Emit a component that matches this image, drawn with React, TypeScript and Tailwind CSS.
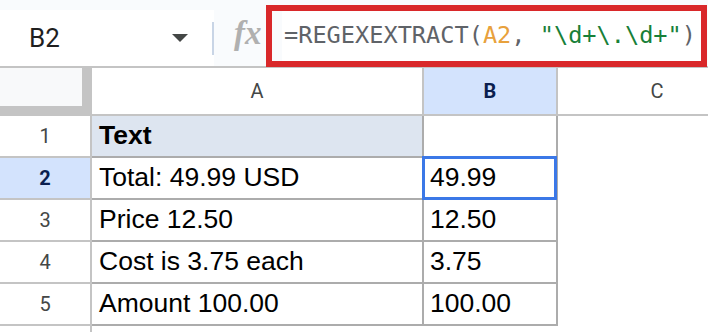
import React from "react";

const rows: { n: number; a: string; b: string }[] = [
  { n: 1, a: "Text", b: "" },
  { n: 2, a: "Total: 49.99 USD", b: "49.99" },
  { n: 3, a: "Price 12.50", b: "12.50" },
  { n: 4, a: "Cost is 3.75 each", b: "3.75" },
  { n: 5, a: "Amount 100.00", b: "100.00" },
];

export default function App() {
  return (
    <div className="w-[708px] h-[332px] overflow-hidden bg-white" style={{ fontFamily: "Roboto, 'Liberation Sans', sans-serif" }}>
      {/* Top bar */}
      <div className="flex h-[66px] bg-[#f9fbfd]">
        <div className="shrink-0 mt-[10px] h-[56px] w-[214px] bg-white flex items-center">
          <span className="ml-[29px] text-[26px] text-[#1f1f1f] leading-none">B2</span>
          <div className="ml-auto mr-[24px] w-0 h-0 border-l-[8px] border-r-[8px] border-t-[8px] border-l-transparent border-r-transparent border-t-[#444746]" />
          <div className="w-[2px] h-[33px] bg-[#c9d5e6]" />
        </div>
        <div className="shrink-0 w-[52px] flex items-center pl-[20px]">
          <span
            className="text-[33px] italic font-bold text-[#b0b0b0] leading-none"
            style={{ fontFamily: "'Liberation Serif', serif" }}
          >
            fx
          </span>
        </div>
        <div className="shrink-0 relative z-10 mt-[5px] h-[62px] w-[441px] border-[6px] border-[#d9282a] bg-[#f9fbfd] flex">
          <div className="ml-[10px] flex-1 bg-white flex items-center pl-[2px] whitespace-pre text-[23.6px] text-[#5f6368]" style={{ fontFamily: "'DejaVu Sans Mono', monospace" }}>
            <span>=REGEXEXTRACT(</span>
            <span className="text-[#e8a13c]">A2</span>
            <span>, </span>
            <span className="text-[#188038]">"\d+\.\d+"</span>
            <span>)</span>
          </div>
        </div>
      </div>
      <div className="h-[2px] bg-[#c4c4c4]" />

      {/* Column headers */}
      <div className="flex h-[48px] border-b-2 border-[#c4c4c4] text-[20px] text-[#444746]">
        <div className="shrink-0 w-[92px] h-[46px] bg-[#c4c4c4]">
          <div className="w-[82px] h-[38px] bg-[#f8f9fa]" />
        </div>
        <div className="shrink-0 w-[332px] border-r-2 border-[#c4c4c4] flex items-center justify-center">A</div>
        <div className="shrink-0 w-[134px] border-r-2 border-[#c4c4c4] bg-[#d3e3fd] flex items-center justify-center font-bold text-[#0b1f4f]">B</div>
        <div className="shrink-0 w-[198px] flex items-center justify-center">C</div>
      </div>

      {/* Data rows */}
      {rows.map((r) => (
        <div key={r.n} className="flex h-[42px]">
          <div
            className={
              r.n === 2
                ? "shrink-0 w-[92px] border-r-2 border-b-2 border-[#c4c4c4] bg-[#d3e3fd] flex items-center justify-center text-[20px] font-bold text-[#0b1f4f]"
                : "shrink-0 w-[92px] border-r-2 border-b-2 border-[#c4c4c4] flex items-center justify-center text-[20px] text-[#444746]"
            }
          >
            {r.n}
          </div>
          <div
            className={
              r.n === 1
                ? "shrink-0 w-[332px] border-r-2 border-b-2 border-[#acacac] bg-[#dde5f0] flex items-center pl-[7px] text-[26.5px] font-bold text-black"
                : "shrink-0 w-[332px] border-r-2 border-b-2 border-[#acacac] flex items-center pl-[7px] text-[26.5px] text-black"
            }
            style={{ fontFamily: "'Liberation Sans', Arial, sans-serif" }}
          >
            {r.a}
          </div>
          <div
            className="shrink-0 relative w-[134px] border-r-2 border-b-2 border-[#acacac] flex items-center pl-[6px] text-[26.5px] text-black"
            style={{ fontFamily: "'Liberation Sans', Arial, sans-serif" }}
          >
            {r.b}
            {r.n === 2 && (
              <div className="absolute left-[-2px] top-[-2px] w-[135px] h-[44px] border-[3px] border-[#3b78e7]" />
            )}
          </div>
          <div className="shrink-0 w-[198px]" />
        </div>
      ))}
      <div className="flex h-[20px]">
        <div className="shrink-0 w-[92px] border-r-2 border-[#c4c4c4]" />
      </div>
    </div>
  );
}
